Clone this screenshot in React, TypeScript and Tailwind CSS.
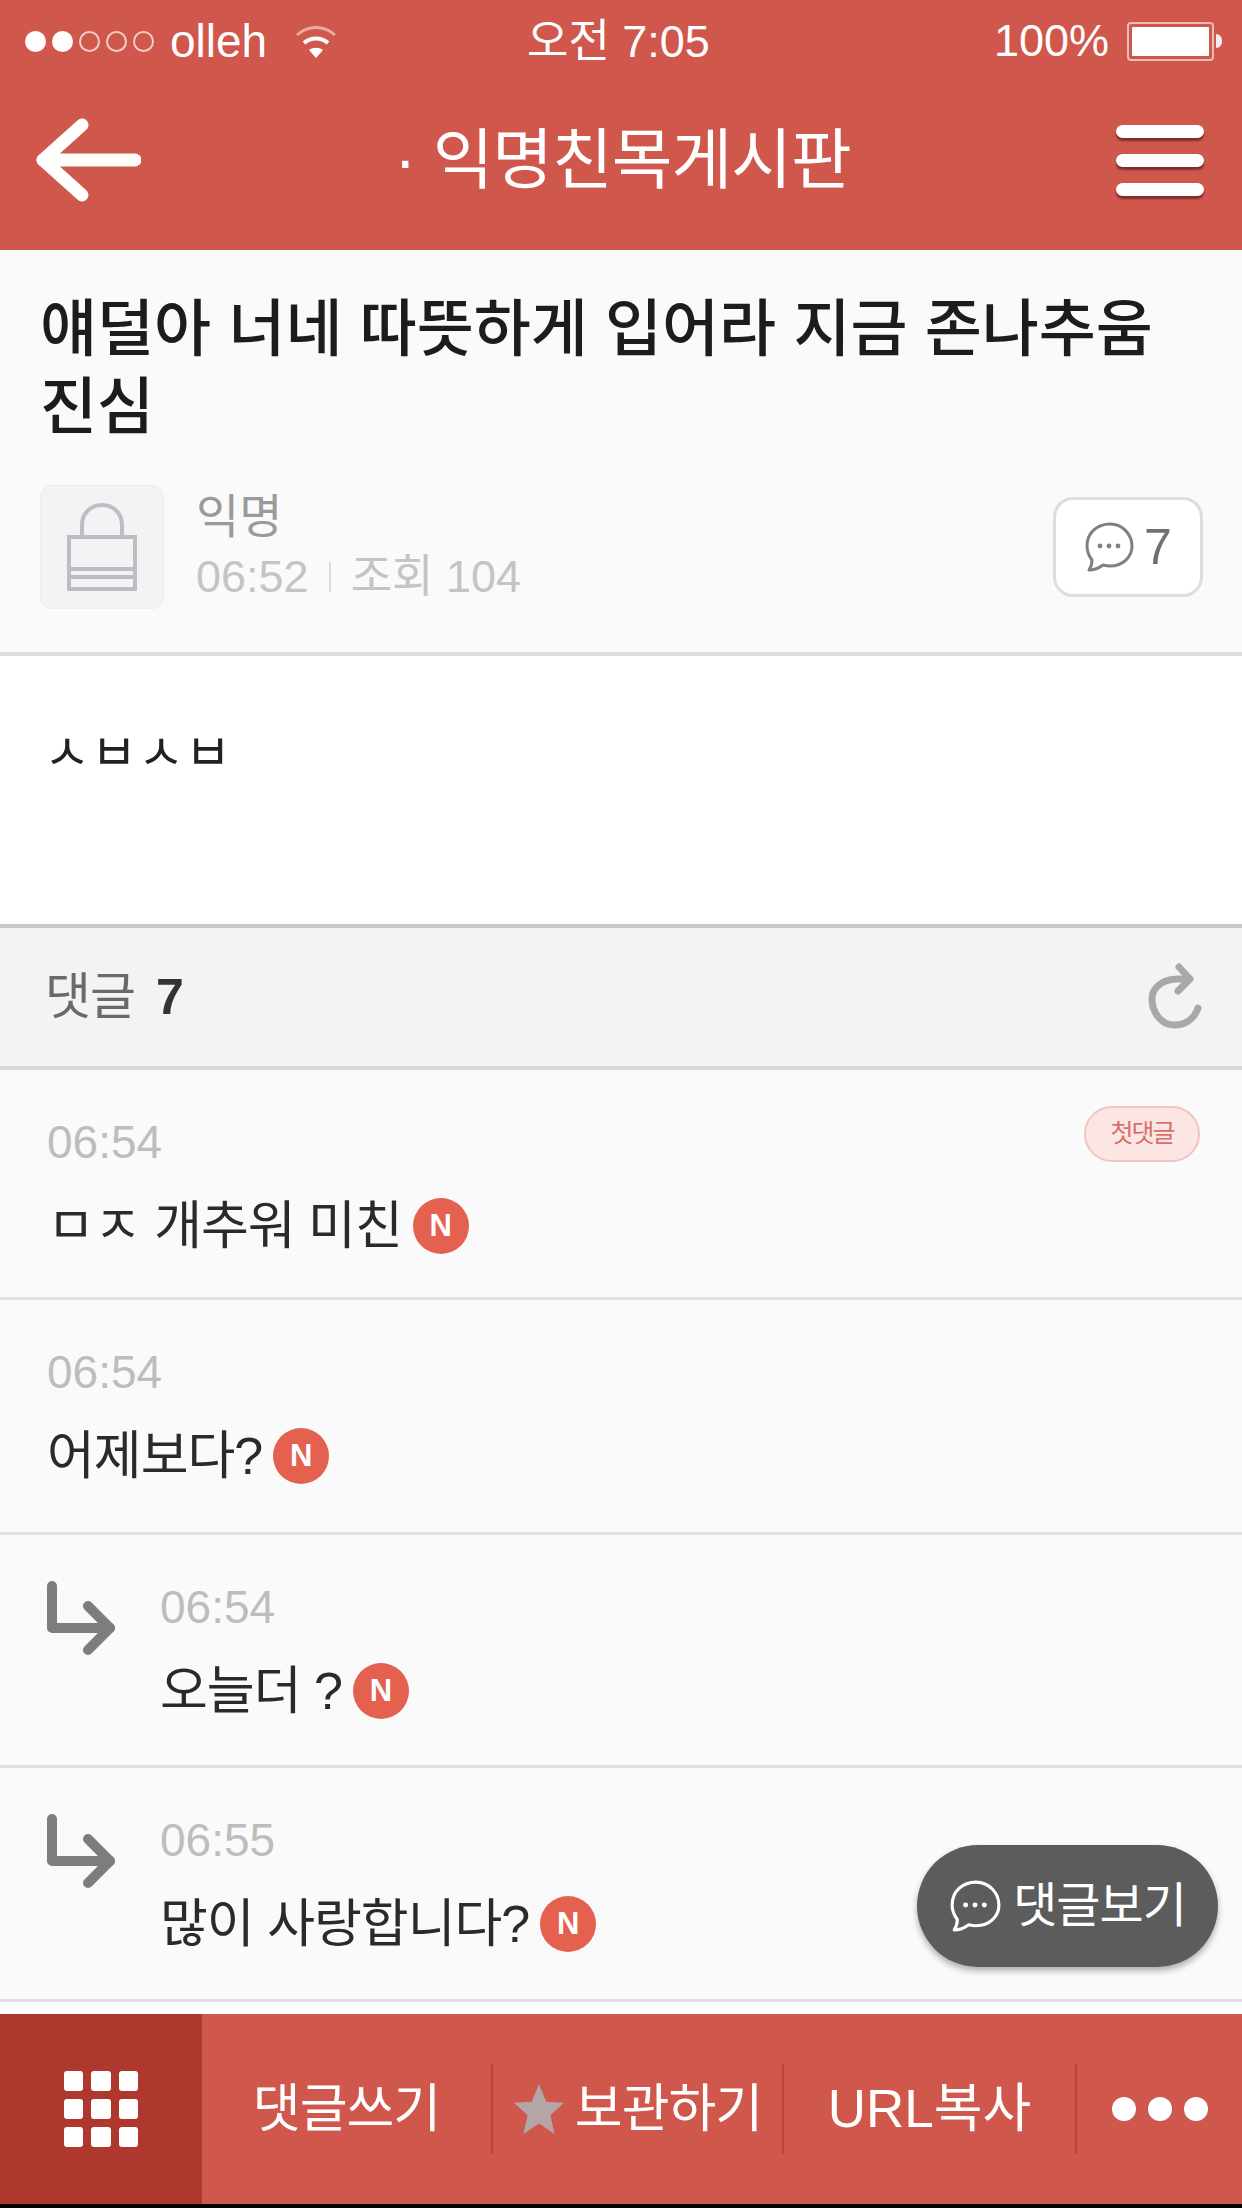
const font = { fontFamily: '"Liberation Sans", "Noto Sans CJK KR", sans-serif' };

function NewBadge() {
  return (
    <span className="inline-flex items-center justify-center w-[56px] h-[56px] rounded-full bg-[#e4604f] text-white text-[31px] font-bold ml-[11px] shrink-0 tracking-normal">
      N
    </span>
  );
}

function BubbleIcon({ className, color }: { className: string; color: string }) {
  return (
    <svg viewBox="0 0 50 50" className={className} fill="none" stroke={color} strokeWidth="3">
      <path d="M26 2C13 2 3 11 3 24c0 6 2 10 5 14 0 3-1 7-3 10 5 0 10-2 14-5 2 .5 5 1 7 1 13 0 22-9 22-20S39 2 26 2z" strokeLinejoin="round" />
      <circle cx="16" cy="24" r="2.4" fill={color} stroke="none" />
      <circle cx="25" cy="24" r="2.4" fill={color} stroke="none" />
      <circle cx="34" cy="24" r="2.4" fill={color} stroke="none" />
    </svg>
  );
}

function ReplyArrow() {
  return (
    <svg viewBox="0 0 68 76" className="w-[68px] h-[76px] shrink-0" fill="none" stroke="#7d7d7d" strokeWidth="10" strokeLinecap="round" strokeLinejoin="round">
      <path d="M5 5v42h58" />
      <path d="M41 25l22 22-22 22" />
    </svg>
  );
}

function Comment({ time, text, reply, first, h }: { time: string; text: string; reply?: boolean; first?: boolean; h: string }) {
  return (
    <div className={`${h} border-b-[3px] border-[#e0e0e0] bg-[#fafafa] flex items-start pl-[47px] pr-[42px]`}>
      {reply && (
        <div className="w-[113px] shrink-0 pt-[46px]">
          <ReplyArrow />
        </div>
      )}
      <div className="flex-1 min-w-0 pt-[46px]">
        <div className="flex items-start justify-between h-[52px]">
          <span className="text-[46px] leading-[52px] text-[#bdbdbd]">{time}</span>
          {first && (
            <span className="-mt-[10px] w-[116px] h-[56px] rounded-full border-2 border-[#f2c4c0] bg-[#fbe6e4] text-[#d8706a] text-[25px] tracking-[-2px] flex items-center justify-center">
              첫댓글
            </span>
          )}
        </div>
        <div className="mt-[28px] flex items-center h-[60px] text-[52px] text-[#2a2a2a] tracking-[-1px]">
          <span>{text}</span>
          <NewBadge />
        </div>
      </div>
    </div>
  );
}

export default function App() {
  return (
    <div className="w-[1242px] h-[2208px] relative overflow-hidden bg-black flex flex-col" style={font}>
      {/* 상단 */}
      <header className="h-[250px] shrink-0 bg-[#d0574c] text-white">
        <div className="h-[82px] pl-[25px] pr-[20px] flex items-center justify-between relative">
          <div className="flex items-center">
            <span className="flex gap-[6px] items-center">
              <i className="w-[21px] h-[21px] rounded-full bg-white" />
              <i className="w-[21px] h-[21px] rounded-full bg-white" />
              <i className="w-[21px] h-[21px] rounded-full border-2 border-white/70" />
              <i className="w-[21px] h-[21px] rounded-full border-2 border-white/70" />
              <i className="w-[21px] h-[21px] rounded-full border-2 border-white/70" />
            </span>
            <span className="text-[46px] ml-[16px]">olleh</span>
            <svg viewBox="0 0 44 36" className="w-[44px] h-[36px] ml-[27px]" fill="none" stroke="white" strokeLinecap="butt">
              <path d="M3 12c11-10 27-10 38 0" strokeWidth="3" opacity="0.5" />
              <path d="M10 20c7-6 17-6 24 0" strokeWidth="4" />
              <path d="M22 35l-7-8c4-3 10-3 14 0z" fill="white" stroke="none" />
            </svg>
          </div>
          <span className="absolute left-[527px] text-[45px] font-normal leading-none">오전 7:05</span>
          <div className="flex items-center">
            <span className="text-[45px]">100%</span>
            <span className="ml-[18px] w-[87px] h-[39px] border-2 border-white/60 p-[3px] rounded-[4px]">
              <span className="block w-full h-full bg-white rounded-[1px]" />
            </span>
            <span className="w-[6px] h-[14px] bg-white/90 rounded-r-full ml-[2px]" />
          </div>
        </div>
        <div className="h-[168px] flex items-center justify-between pl-[36px] pr-[38px] pb-[12px]">
          <svg viewBox="0 0 105 84" className="w-[105px] h-[84px]" fill="none" stroke="white" strokeWidth="13" strokeLinecap="round" strokeLinejoin="round">
            <path d="M46 7L7 42l39 35" />
            <path d="M7 42h92" />
          </svg>
          <h1 className="text-[66px] text-center font-normal tracking-[-1px] pr-[12px]">· 익명친목게시판</h1>
          <div className="w-[88px] flex flex-col gap-[16px]">
            <i className="block h-[13px] rounded-full bg-white shadow-[0_3px_2px_rgba(90,30,25,0.7)]" />
            <i className="block h-[13px] rounded-full bg-white shadow-[0_3px_2px_rgba(90,30,25,0.7)]" />
            <i className="block h-[13px] rounded-full bg-white shadow-[0_3px_2px_rgba(90,30,25,0.7)]" />
          </div>
        </div>
      </header>

      {/* 글 정보 */}
      <section className="h-[406px] shrink-0 bg-[#fafafa] border-b-[4px] border-[#dcdcdc] pl-[40px] pr-[39px] pt-[41px]">
        <h2 className="text-[62px] leading-[78px] text-[#1c1c1c] font-medium">
          얘덜아 너네 따뜻하게 입어라 지금 존나추움 진심
        </h2>
        <div className="mt-[38px] flex items-center">
          <div className="w-[124px] h-[124px] rounded-[12px] bg-[#f3f3f5] border border-[#ececee] flex items-center justify-center">
            <svg viewBox="0 0 72 88" className="w-[72px] h-[88px]" fill="none" stroke="#bdbdc2" strokeWidth="4">
              <path d="M16 34V22C16 10 25 2 36 2s20 8 20 20v12" />
              <rect x="3" y="34" width="66" height="52" />
              <path d="M3 66h66" />
              <path d="M3 74h66" />
            </svg>
          </div>
          <div className="ml-[32px] flex-1">
            <div className="text-[47px] leading-[56px] text-[#9a9a9a]">익명</div>
            <div className="text-[45px] leading-[56px] text-[#c4c4c4] flex items-center mt-[4px]">
              <span>06:52</span>
              <i className="w-[2px] h-[30px] bg-[#dcdcdc] mx-[20px]" />
              <span>조회 104</span>
            </div>
          </div>
          <div className="w-[150px] h-[100px] bg-white border-[3px] border-[#dddddd] rounded-[20px] flex items-center justify-center gap-[10px] text-[#707070] text-[50px]">
            <BubbleIcon className="w-[50px] h-[50px]" color="#808080" />
            <span>7</span>
          </div>
        </div>
      </section>

      {/* 본문 */}
      <section className="h-[272px] shrink-0 bg-white border-b-[4px] border-[#c8c8c8] px-[44px] pt-[76px]">
        <div className="h-[38px] flex items-end overflow-hidden">
          <p className="text-[50px] leading-[50px] text-[#222222] translate-y-[8px] tracking-[1px]">ㅅㅂㅅㅂ</p>
        </div>
      </section>

      {/* 댓글 헤더 */}
      <section className="h-[142px] shrink-0 bg-[#f3f3f3] border-b-[4px] border-[#d8d8d8] px-[45px] flex items-center justify-between pr-[22px]">
        <div className="text-[50px] text-[#6a6a6a] flex items-center gap-[21px]">
          <span className="tracking-[-1px]">댓글</span>
          <span className="font-bold text-[#333333]">7</span>
        </div>
        <svg viewBox="0 0 90 90" className="w-[90px] h-[90px]" fill="none" stroke="#a8a8a8" strokeWidth="7" strokeLinecap="round" strokeLinejoin="round">
          <path d="M68 56C64 68 54 73 44 73 31 73 22 60 22 47c0-11 10-20 26-20h11" />
          <path d="M49 15l11 12-12 12" />
        </svg>
      </section>

      {/* 댓글 목록 */}
      <div className="h-[944px] shrink-0 bg-white">
        <Comment h="h-[230px]" time="06:54" text="ㅁㅈ 개추워 미친" first />
        <Comment h="h-[235px]" time="06:54" text="어제보다?" />
        <Comment h="h-[233px]" time="06:54" text="오늘더 ?" reply />
        <Comment h="h-[234px]" time="06:55" text="많이 사랑합니다?" reply />
      </div>

      {/* 하단 */}
      <nav className="h-[190px] shrink-0 bg-[#d0574c] flex items-stretch text-white text-[52px]">
        <div className="w-[202px] bg-[#ae372e] grid grid-cols-3 content-center justify-center gap-[8px] px-[64px]">
          {[0, 1, 2, 3, 4, 5, 6, 7, 8].map((n) => (
            <i key={n} className="h-[20px] rounded-[3px] bg-white" />
          ))}
        </div>
        <div className="w-[289px] flex items-center justify-center tracking-[-1px]">댓글쓰기</div>
        <div className="my-[50px] w-[2px] bg-[#b9463c]" />
        <div className="w-[289px] flex items-center justify-center gap-[10px] tracking-[-1px]">
          <svg viewBox="0 0 50 50" className="w-[52px] h-[52px]">
            <path d="M25 1l7 17 17 1-13 12 4 18-15-10-15 10 4-18L1 19l17-1z" fill="#b3a5a8" />
          </svg>
          <span>보관하기</span>
        </div>
        <div className="my-[50px] w-[2px] bg-[#b9463c]" />
        <div className="w-[291px] flex items-center justify-center text-[53px]">URL복사</div>
        <div className="my-[50px] w-[2px] bg-[#b9463c]" />
        <div className="flex-1 flex items-center justify-center gap-[12px]">
          <i className="w-[24px] h-[24px] rounded-full bg-white" />
          <i className="w-[24px] h-[24px] rounded-full bg-white" />
          <i className="w-[24px] h-[24px] rounded-full bg-white" />
        </div>
      </nav>

      {/* 플로팅 버튼 */}
      <div className="absolute left-[917px] top-[1845px] w-[301px] h-[122px] rounded-full bg-[#5c5c5c] shadow-[0_4px_6px_rgba(0,0,0,0.3)] flex items-center justify-center gap-[12px] text-white text-[48px] tracking-[-1px]">
        <BubbleIcon className="w-[52px] h-[52px]" color="#ffffff" />
        <span>댓글보기</span>
      </div>
    </div>
  );
}
